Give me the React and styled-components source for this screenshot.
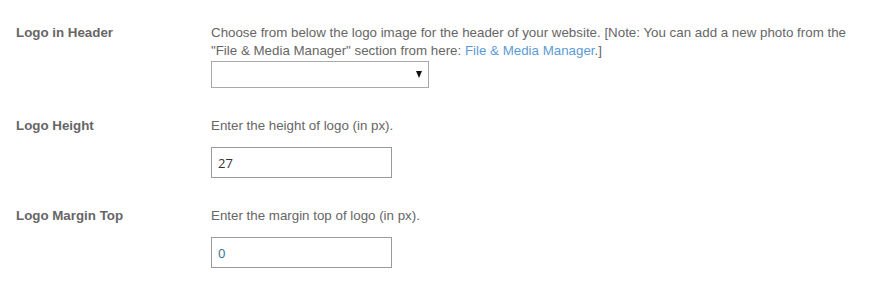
import React from 'react';
import styled, { createGlobalStyle } from 'styled-components';

const GlobalStyle = createGlobalStyle`
  body {
    margin: 0;
    background: #fff;
    font-family: "Liberation Sans", Arial, sans-serif;
  }
`;

const Page = styled.div`
  padding: 24px 16px 0;
  display: flex;
  flex-direction: column;
  gap: 29px;
`;

const Row = styled.div`
  display: grid;
  grid-template-columns: 195px 1fr;
  align-items: start;
`;

const Label = styled.div`
  font-size: 13.33px;
  font-weight: bold;
  line-height: 18px;
  color: #666;
`;

const Field = styled.div`
  display: flex;
  flex-direction: column;
  align-items: flex-start;
  gap: ${(props) => props.gap}px;
`;

const Help = styled.div`
  font-size: 13.33px;
  line-height: 18px;
  color: #666;
  a {
    color: #5b9bd5;
    text-decoration: none;
  }
`;

const Select = styled.div`
  box-sizing: border-box;
  width: 218px;
  height: 27px;
  border: 1px solid #aaa;
  background: #fff;
  display: flex;
  align-items: center;
  justify-content: flex-end;
  padding-right: 6px;
`;

const Arrow = styled.span`
  width: 0;
  height: 0;
  border-left: 3.5px solid transparent;
  border-right: 3.5px solid transparent;
  border-top: 7px solid #111;
`;

const Input = styled.input`
  box-sizing: border-box;
  width: 181px;
  height: 31px;
  border: 1px solid #9a9a9a;
  padding: 0 6px;
  font-family: "Open Sans", sans-serif;
  font-size: 13px;
  color: ${(props) => props.tone || '#333'};
  outline: none;
`;

export default function App() {
  return (
    <>
      <GlobalStyle />
      <Page>
        <Row>
          <Label>Logo in Header</Label>
          <Field gap={1}>
            <Help>
              Choose from below the logo image for the header of your website. [Note: You can add a new photo from the
              "File &amp; Media Manager" section from here: <a href="#fm">File &amp; Media Manager</a>.]
            </Help>
            <Select><Arrow /></Select>
          </Field>
        </Row>
        <Row>
          <Label>Logo Height</Label>
          <Field gap={12}>
            <Help>Enter the height of logo (in px).</Help>
            <Input defaultValue="27" />
          </Field>
        </Row>
        <Row>
          <Label>Logo Margin Top</Label>
          <Field gap={12}>
            <Help>Enter the margin top of logo (in px).</Help>
            <Input defaultValue="0" tone="#31708f" />
          </Field>
        </Row>
      </Page>
    </>
  );
}
